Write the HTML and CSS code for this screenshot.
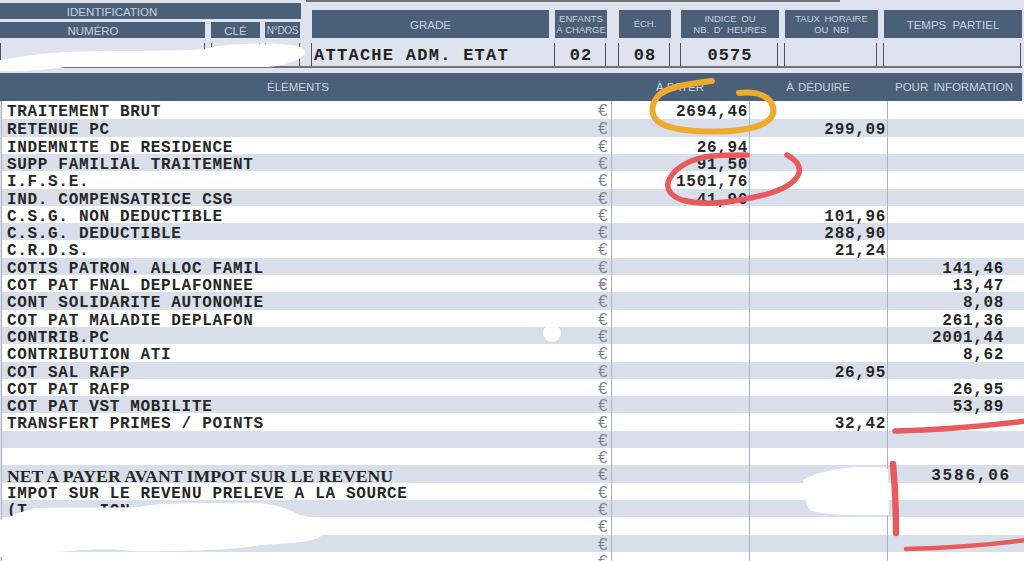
FILE: index.html
```html
<!DOCTYPE html>
<html lang="fr">
<head>
<meta charset="utf-8">
<title>Bulletin de paie</title>
<link rel="stylesheet" href="styles.css">
</head>
<body>
<div class="page">
  <div class="topline"></div>
  <div class="head-row">
    <div class="ident">
      <div class="cell ident-title">IDENTIFICATION</div>
      <div class="ident-sub">
        <div class="cell c-num num-head">NUMÉRO</div>
        <div class="cell c-cle">CLÉ</div>
        <div class="cell c-dos small">N°DOS</div>
      </div>
    </div>
    <div class="cell c-grade">GRADE</div>
    <div class="cell c-enf tiny">ENFANTS<br>À CHARGE</div>
    <div class="cell c-ech tiny">ÉCH.</div>
    <div class="cell c-ind tiny wide">INDICE OU<br>NB. D' HEURES</div>
    <div class="cell c-taux tiny wide">TAUX HORAIRE<br>OU NBI</div>
    <div class="cell c-tps">TEMPS PARTIEL</div>
  </div>
  <div class="val-row">
    <div class="val c-num"></div>
    <div class="val c-cle"></div>
    <div class="val c-dos"></div>
    <div class="val c-grade grade-text">ATTACHE ADM. ETAT</div>
    <div class="val c-enf">02</div>
    <div class="val c-ech">08</div>
    <div class="val c-ind">0575</div>
    <div class="val c-taux"></div>
    <div class="val c-tps"></div>
  </div>
  <div class="tbl-head">
    <div class="th t-label">ÉLÉMENTS</div>
    <div class="th t-pay">À PAYER</div>
    <div class="th t-ded">À DÉDUIRE</div>
    <div class="th t-info">POUR INFORMATION</div>
  </div>
  <div class="rows">
    <div class="row first"><div class="lbl">TRAITEMENT BRUT</div><div class="eur">€</div><div class="amt a-pay">2694,46</div><div class="amt a-ded"></div><div class="amt a-info"></div></div>
    <div class="row"><div class="lbl">RETENUE PC</div><div class="eur">€</div><div class="amt a-pay"></div><div class="amt a-ded">299,09</div><div class="amt a-info"></div></div>
    <div class="row"><div class="lbl">INDEMNITE DE RESIDENCE</div><div class="eur">€</div><div class="amt a-pay">26,94</div><div class="amt a-ded"></div><div class="amt a-info"></div></div>
    <div class="row"><div class="lbl">SUPP FAMILIAL TRAITEMENT</div><div class="eur">€</div><div class="amt a-pay">91,50</div><div class="amt a-ded"></div><div class="amt a-info"></div></div>
    <div class="row"><div class="lbl">I.F.S.E.</div><div class="eur">€</div><div class="amt a-pay">1501,76</div><div class="amt a-ded"></div><div class="amt a-info"></div></div>
    <div class="row"><div class="lbl">IND. COMPENSATRICE CSG</div><div class="eur">€</div><div class="amt a-pay">41,96</div><div class="amt a-ded"></div><div class="amt a-info"></div></div>
    <div class="row"><div class="lbl">C.S.G. NON DEDUCTIBLE</div><div class="eur">€</div><div class="amt a-pay"></div><div class="amt a-ded">101,96</div><div class="amt a-info"></div></div>
    <div class="row"><div class="lbl">C.S.G. DEDUCTIBLE</div><div class="eur">€</div><div class="amt a-pay"></div><div class="amt a-ded">288,90</div><div class="amt a-info"></div></div>
    <div class="row"><div class="lbl">C.R.D.S.</div><div class="eur">€</div><div class="amt a-pay"></div><div class="amt a-ded">21,24</div><div class="amt a-info"></div></div>
    <div class="row"><div class="lbl">COTIS PATRON. ALLOC FAMIL</div><div class="eur">€</div><div class="amt a-pay"></div><div class="amt a-ded"></div><div class="amt a-info">141,46</div></div>
    <div class="row"><div class="lbl">COT PAT FNAL DEPLAFONNEE</div><div class="eur">€</div><div class="amt a-pay"></div><div class="amt a-ded"></div><div class="amt a-info">13,47</div></div>
    <div class="row"><div class="lbl">CONT SOLIDARITE AUTONOMIE</div><div class="eur">€</div><div class="amt a-pay"></div><div class="amt a-ded"></div><div class="amt a-info">8,08</div></div>
    <div class="row"><div class="lbl">COT PAT MALADIE DEPLAFON</div><div class="eur">€</div><div class="amt a-pay"></div><div class="amt a-ded"></div><div class="amt a-info">261,36</div></div>
    <div class="row"><div class="lbl">CONTRIB.PC</div><div class="eur">€</div><div class="amt a-pay"></div><div class="amt a-ded"></div><div class="amt a-info">2001,44</div></div>
    <div class="row"><div class="lbl">CONTRIBUTION ATI</div><div class="eur">€</div><div class="amt a-pay"></div><div class="amt a-ded"></div><div class="amt a-info">8,62</div></div>
    <div class="row"><div class="lbl">COT SAL RAFP</div><div class="eur">€</div><div class="amt a-pay"></div><div class="amt a-ded">26,95</div><div class="amt a-info"></div></div>
    <div class="row"><div class="lbl">COT PAT RAFP</div><div class="eur">€</div><div class="amt a-pay"></div><div class="amt a-ded"></div><div class="amt a-info">26,95</div></div>
    <div class="row"><div class="lbl">COT PAT VST MOBILITE</div><div class="eur">€</div><div class="amt a-pay"></div><div class="amt a-ded"></div><div class="amt a-info">53,89</div></div>
    <div class="row"><div class="lbl">TRANSFERT PRIMES / POINTS</div><div class="eur">€</div><div class="amt a-pay"></div><div class="amt a-ded">32,42</div><div class="amt a-info"></div></div>
    <div class="row"><div class="lbl"></div><div class="eur">€</div><div class="amt a-pay"></div><div class="amt a-ded"></div><div class="amt a-info"></div></div>
    <div class="row"><div class="lbl"></div><div class="eur">€</div><div class="amt a-pay"></div><div class="amt a-ded"></div><div class="amt a-info"></div></div>
    <div class="row net"><div class="lbl">NET A PAYER AVANT IMPOT SUR LE REVENU</div><div class="eur">€</div><div class="amt a-pay"></div><div class="amt a-ded"></div><div class="amt a-info">3586,06</div></div>
    <div class="row"><div class="lbl">IMPOT SUR LE REVENU PRELEVE A LA SOURCE</div><div class="eur">€</div><div class="amt a-pay"></div><div class="amt a-ded"></div><div class="amt a-info"></div></div>
    <div class="row"><div class="lbl">(T&nbsp;&nbsp;&nbsp;&nbsp;&nbsp;&nbsp;&nbsp;ION</div><div class="eur">€</div><div class="amt a-pay"></div><div class="amt a-ded"></div><div class="amt a-info"></div></div>
    <div class="row"><div class="lbl"></div><div class="eur">€</div><div class="amt a-pay"></div><div class="amt a-ded"></div><div class="amt a-info"></div></div>
    <div class="row"><div class="lbl"></div><div class="eur">€</div><div class="amt a-pay"></div><div class="amt a-ded"></div><div class="amt a-info"></div></div>
    <div class="row"><div class="lbl"></div><div class="eur">€</div><div class="amt a-pay"></div><div class="amt a-ded"></div><div class="amt a-info"></div></div>
  </div>
  <svg class="marks" width="1024" height="561" viewBox="0 0 1024 561" aria-hidden="true">
    <g fill="#fff">
      <path d="M0 60 C25 56 45 53 65 52 C110 50 170 52 205 49 C225 43 270 42 297 46 C308 49 307 55 299 59 C290 63 280 66 268 67 C200 67 130 67 65 67 C45 70 20 72 0 71 Z"/>
      <circle cx="552" cy="333" r="9"/>
      <path d="M803 480 C815 473 835 468 860 467 C875 467 884 467 888 469 L889 515 C860 516 825 515 812 511 C802 505 808 492 803 480 Z"/>
      <path d="M0 520 C6 519 10 516 16 514 C24 511 30 509 36 508 C70 507 110 508 140 507 C150 503 200 503 250 503 C275 503 288 509 300 515 C318 518 326 524 322 534 C320 541 300 543 260 545 C240 550 180 552 130 551 C105 547 70 551 47 553 C25 555 8 557 0 557 Z"/>
    </g>
    <g fill="none" stroke-linecap="round">
      <path class="orange" d="M712 81 C690 84 668 86 658 96 C650 106 650 118 662 124 C680 133 730 134 755 127 C772 122 778 112 770 101 C762 92 748 92 739 93"/>
      <path class="red" d="M787 155 C796 160 801 166 799 173 C795 185 775 194 745 199 C725 203 700 205 682 200 C668 195 665 186 670 178 C676 167 692 158 712 156 C725 155 738 155 747 155"/>
      <path class="red dash" d="M602 284 L606 284"/>
      <path class="red" d="M895 431 C940 430 985 426 1026 421"/>
      <path class="red wide-stroke" d="M893 464 C895 485 896 510 896 533"/>
      <path class="red thin-stroke" d="M906 549 C950 548 990 545 1026 540"/>
    </g>
  </svg>
</div>
</body>
</html>
```
FILE: styles.css
```css
* { box-sizing: border-box; }
html, body { margin: 0; padding: 0; }
body {
  width: 1024px;
  height: 561px;
  overflow: hidden;
  background: #dfe3ee;
  font-family: "Liberation Sans", Arial, sans-serif;
}
.page {
  position: relative;
  width: 1024px;
  height: 561px;
  overflow: hidden;
  padding-top: 3px;
}
.topline {
  position: absolute;
  left: 306px;
  top: 0;
  width: 534px;
  height: 2px;
  background: #6d7278;
}
.head-row {
  display: flex;
  align-items: flex-end;
  height: 35px;
}
.cell {
  display: flex;
  align-items: center;
  justify-content: center;
  text-align: center;
  background: #4a6079;
  color: #c9d0dc;
  font-size: 11.5px;
  line-height: 12px;
  padding-top: 2px;
}
.ident { width: 301px; flex: none; }
.ident-title { height: 16px; padding-right: 77px; }
.ident-sub { display: flex; margin-top: 3px; }
.ident-sub .cell { height: 16px; }
.num-head { padding-right: 19px; }
.small { font-size: 10px; letter-spacing: -0.3px; }
.tiny { font-size: 9.5px; line-height: 11.5px; padding-top: 0; }
.wide { word-spacing: 2px; }
.c-num { width: 205px; flex: none; }
.c-cle { width: 49px; margin-left: 6px; flex: none; }
.c-dos { width: 35px; margin-left: 5px; flex: none; }
.c-grade { width: 237px; margin-left: 11px; flex: none; }
.c-enf { width: 52px; margin-left: 6px; flex: none; }
.c-ech { width: 52px; margin-left: 12px; flex: none; }
.c-ind { width: 98px; margin-left: 10px; flex: none; }
.c-taux { width: 93px; margin-left: 6px; flex: none; }
.c-tps { width: 138px; margin-left: 6px; flex: none; word-spacing: 3px; }
.head-row > .cell { height: 28px; }
.val-row {
  display: flex;
  margin-top: 5px;
  height: 25px;
  width: 1022px;
  border-bottom: 2px solid #6d7278;
}
.val {
  display: flex;
  align-items: center;
  justify-content: center;
  border-left: 1px solid #4d535b;
  border-right: 1px solid #4d535b;
  color: #222;
  font-family: "Liberation Mono", monospace;
  font-weight: bold;
  font-size: 17px;
  letter-spacing: 1.1px;
  padding: 2px 0 0 2px;
}
.grade-text {
  justify-content: flex-start;
  padding-left: 2px;
  letter-spacing: 1.27px;
  border-right: none;
}
.tbl-head {
  display: flex;
  height: 28px;
  margin-top: 5px;
  width: 1022px;
  background: #4a6079;
  color: #c9d0dc;
  font-size: 11.5px;
}
.th { display: flex; align-items: center; justify-content: center; flex: none; }
.t-label { width: 596px; }
.t-pay { width: 168px; }
.t-ded { width: 108px; word-spacing: 1px; }
.t-info { width: 150px; padding-left: 14px; word-spacing: 2px; }
.rows { margin-left: 1px; border-left: 1px solid #a5b0c3; }
.row {
  display: flex;
  height: 17.3px;
  background: #d9dfea;
  color: #262626;
  font-family: "Liberation Mono", monospace;
  font-weight: bold;
  font-size: 16px;
  line-height: 23.5px;
  letter-spacing: 0.67px;
}
.row:nth-child(odd) { background: #fff; }
.row.first { height: 18.4px; }
.lbl {
  width: 594px;
  padding-left: 5px;
  flex: none;
  white-space: nowrap;
}
.eur {
  width: 15px;
  flex: none;
  padding-left: 2px;
  color: #7d8793;
  font-family: "Liberation Sans", Arial, sans-serif;
  font-weight: normal;
  font-size: 17px;
  line-height: 19px;
  letter-spacing: 0;
}
.amt {
  flex: none;
  text-align: right;
  border-left: 1px solid #aab5c8;
  white-space: nowrap;
}
.a-pay { width: 138px; padding-right: 1px; }
.a-ded { width: 138px; padding-right: 1px; }
.a-info { width: 137px; padding-right: 20px; }
.net .lbl {
  font-family: "Liberation Serif", serif;
  font-size: 17.7px;
  line-height: 22px;
  letter-spacing: 0;
}
.net .a-info { padding-right: 13px; letter-spacing: 1.8px; }
.marks { position: absolute; left: 0; top: 0; }
.orange { stroke: #efab2d; stroke-width: 6; }
.red { stroke: #e75b5e; stroke-width: 5.5; }
.dash { stroke-width: 1.5; }
.wide-stroke { stroke-width: 6.5; }
.thin-stroke { stroke-width: 4.5; }
```
